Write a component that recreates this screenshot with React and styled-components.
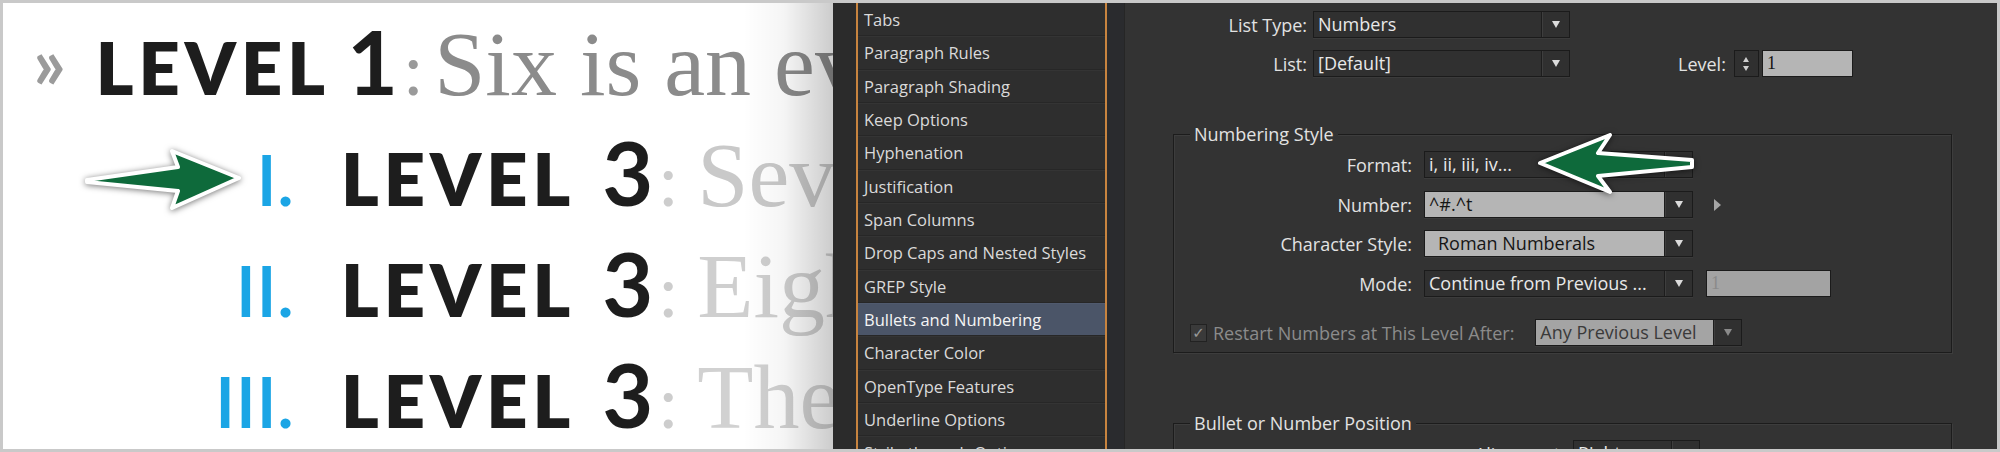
import React from 'react';
import styled, { createGlobalStyle } from 'styled-components';

const GlobalStyle = createGlobalStyle`
  html, body {
    margin: 0;
    padding: 0;
    background: #ffffff;
  }
`;

const Frame = styled.div`
  width: 2000px;
  height: 452px;
  box-sizing: border-box;
  border: 3px solid #c9c9c9;
  display: flex;
  overflow: hidden;
  background: #ffffff;
`;

/* ---------- left: the typeset sample ---------- */

const Sample = styled.div`
  position: relative;
  flex: none;
  width: 830px;
  height: 100%;
  box-sizing: border-box;
  padding-top: 14px;
  overflow: hidden;
  white-space: nowrap;
  font-family: Lato, 'Noto Sans', sans-serif;
`;

const Line = styled.div`
  display: flex;
  align-items: baseline;
  height: 111px;
  padding-left: ${props => props.$indent || 0}px;
  line-height: 1;
`;

const Chevrons = styled.span`
  font-size: 72px;
  font-weight: 700;
  color: #9b9b9b;
  margin-right: 30px;
  position: relative;
  top: -6px;
`;

const Marker = styled.span`
  flex: none;
  width: 291px;
  text-align: right;
  font-size: 72px;
  font-weight: 600;
  color: #1ba5e5;
  margin-right: 47px;
`;

const Caps = styled.span`
  font-size: 72px;
  font-weight: 800;
  color: #1d1d1d;
  letter-spacing: 5px;
`;

const Digit = styled.span`
  font-size: 88px;
  font-weight: 700;
  color: #1d1d1d;
  margin-left: ${props => props.$gap}px;
`;

const Colon = styled.span`
  font-size: 72px;
  font-weight: 400;
  color: ${props => props.$tone};
  margin-left: 6px;
`;

const Body = styled.span`
  font-family: 'Liberation Serif', 'Times New Roman', serif;
  font-size: 92px;
  color: ${props => props.$tone};
  margin-left: ${props => props.$gap}px;
`;

const EdgeShade = styled.div`
  position: absolute;
  top: 0;
  right: 0;
  width: 90px;
  height: 100%;
  pointer-events: none;
  background: linear-gradient(
    to right,
    rgba(0, 0, 0, 0) 0%,
    rgba(0, 0, 0, 0.04) 45%,
    rgba(0, 0, 0, 0.2) 100%
  );
`;

const Pointer = styled.svg`
  position: absolute;
  left: ${props => props.$x}px;
  top: ${props => props.$y}px;
  overflow: visible;
  filter: drop-shadow(0 1px 3px rgba(0, 0, 0, 0.55));
`;

/* ---------- right: the dialog ---------- */

const Dialog = styled.div`
  flex: 1;
  display: flex;
  height: 100%;
  background: #333333;
  font-family: 'Open Sans', 'Noto Sans', sans-serif;
`;

const Gutter = styled.div`
  flex: none;
  width: ${props => props.$w}px;
  background: ${props => props.$bg};
  box-shadow: ${props => props.$edge || 'none'};
`;

const Categories = styled.div`
  flex: none;
  width: 247px;
  height: 100%;
  border-left: 2px solid #c8843f;
  border-right: 2px solid #c8843f;
  background: #2e2e2e;
  overflow: hidden;
`;

const Category = styled.div`
  height: 33.33px;
  box-sizing: border-box;
  padding-left: 6px;
  line-height: 33px;
  font-size: 16.5px;
  color: ${props => (props.$active ? '#f4f4f4' : '#dadada')};
  background: ${props => (props.$active ? '#4b5568' : '#2e2e2e')};
  border-bottom: 1px solid #272727;
  box-shadow: inset 0 1px 0 ${props => (props.$active ? '#55607380' : '#343434')};
  white-space: nowrap;
`;

const Settings = styled.div`
  position: relative;
  flex: 1;
  height: 100%;
  padding-top: 8px;
  box-sizing: border-box;
  overflow: hidden;
  font-size: 18px;
`;

const Row = styled.div`
  display: flex;
  align-items: center;
  height: 27px;
  margin-top: ${props => props.$mt || 0}px;
  padding-left: ${props => props.$pl || 0}px;
`;

const Label = styled.span`
  flex: none;
  width: ${props => (props.$w ? `${props.$w}px` : 'auto')};
  margin-left: ${props => props.$ml || 0}px;
  margin-right: ${props => (props.$gap === undefined ? 6 : props.$gap)}px;
  text-align: right;
  color: ${props => (props.$dim ? '#8b8b8b' : '#e2e2e2')};
  white-space: nowrap;
`;

const Select = styled.div`
  flex: none;
  display: flex;
  width: ${props => props.$w}px;
  height: 27px;
  box-sizing: border-box;
  border: 1px solid #1b1b1b;
  background: ${props => props.$face || '#303030'};
  box-shadow: 0 1px 0 #3b3b3b;
`;

const Value = styled.span`
  flex: 1;
  padding-left: ${props => props.$pl || 4}px;
  line-height: 25px;
  color: ${props => props.$ink || '#e8e8e8'};
  white-space: nowrap;
  overflow: hidden;
  font-family: ${props => (props.$serif ? "'Liberation Serif', serif" : 'inherit')};
`;

const Drop = styled.span`
  flex: none;
  width: 27px;
  display: flex;
  align-items: center;
  justify-content: center;
  background: #303030;
  border-left: 1px solid #1d1d1d;
  box-shadow: inset 1px 0 0 #3e3e3e;
`;

const Caret = styled.span`
  width: 0;
  height: 0;
  border-left: 4.5px solid transparent;
  border-right: 4.5px solid transparent;
  border-${props => (props.$up ? 'bottom' : 'top')}: 7px solid ${props => props.$ink || '#dcdcdc'};
`;

const Field = styled.div`
  flex: none;
  width: ${props => props.$w}px;
  height: 27px;
  margin-left: ${props => props.$ml || 0}px;
  box-sizing: border-box;
  border: 1px solid #1b1b1b;
  background: ${props => props.$face};
  display: flex;
`;

const Spinner = styled.div`
  flex: none;
  width: 25px;
  height: 27px;
  margin-right: 3px;
  box-sizing: border-box;
  border: 1px solid #1b1b1b;
  background: #303030;
  display: flex;
  flex-direction: column;
  align-items: center;
  justify-content: center;
  gap: 4px;

  & > span {
    border-left-width: 3.5px;
    border-right-width: 3.5px;
    border-top-width: 5px;
    border-bottom-width: 5px;
  }
`;

const Reveal = styled.span`
  margin-left: 21px;
  width: 0;
  height: 0;
  border-top: 6px solid transparent;
  border-bottom: 6px solid transparent;
  border-left: 7px solid #a6a6a6;
`;

const Check = styled.span`
  flex: none;
  width: 17px;
  height: 18px;
  box-sizing: border-box;
  border: 1px solid #222;
  background: #3a3a3a;
  color: #9a9a9a;
  font-family: 'DejaVu Sans', sans-serif;
  font-size: 15px;
  line-height: 16px;
  text-align: center;
`;

const Group = styled.fieldset`
  margin: ${props => props.$mt}px 0 0 48px;
  width: 779px;
  box-sizing: border-box;
  padding: 0 0 6px 0;
  border: 1px solid #1c1c1c;
  box-shadow: 1px 1px 0 #3d3d3d, inset 1px 1px 0 #3d3d3d;
  min-inline-size: 0;
`;

const Legend = styled.legend`
  margin-left: 16px;
  padding: 0 4px;
  background: #333333;
  color: #e2e2e2;
  line-height: 22px;
`;

const categories = [
  'Tabs',
  'Paragraph Rules',
  'Paragraph Shading',
  'Keep Options',
  'Hyphenation',
  'Justification',
  'Span Columns',
  'Drop Caps and Nested Styles',
  'GREP Style',
  'Bullets and Numbering',
  'Character Color',
  'OpenType Features',
  'Underline Options',
  'Strikethrough Options'
];

const levels = [
  { marker: 'I.', text: 'Seven is an odd number', tone: '#c9c9c9' },
  { marker: 'II.', text: 'Eight is an even number', tone: '#cfcfcf' },
  { marker: 'III.', text: 'The next one is nine', tone: '#d1d1d1' }
];

const Arrow = ({ d, x, y, w, h }) => (
  <Pointer $x={x} $y={y} width={w} height={h} viewBox={`0 0 ${w} ${h}`}>
    <path
      d={d}
      fill="#0e6a3b"
      stroke="#ffffff"
      strokeWidth="4"
      strokeLinejoin="round"
    />
  </Pointer>
);

export default function App() {
  return (
    <>
      <GlobalStyle />
      <Frame>
        <Sample>
          <Line $indent={30}>
            <Chevrons>»</Chevrons>
            <Caps>LEVEL</Caps>
            <Digit $gap={17}>1</Digit>
            <Colon $tone="#9a9a9a">:</Colon>
            <Body $tone="#8b8b8b" $gap={12}>
              Six is an even number
            </Body>
          </Line>
          {levels.map(level => (
            <Line key={level.marker}>
              <Marker>{level.marker}</Marker>
              <Caps>LEVEL</Caps>
              <Digit $gap={27}>3</Digit>
              <Colon $tone="#cdcdcd">:</Colon>
              <Body $tone={level.tone} $gap={20}>
                {level.text}
              </Body>
            </Line>
          ))}
          <EdgeShade />
          <Arrow
            x={72}
            y={137}
            w={180}
            h={85}
            d="M12 40 L103 27 L97 11 L164 38 L97 68 L103 51 L12 42 Z"
          />
        </Sample>

        <Dialog>
          <Gutter $w={23} $bg="#2b2b2b" />
          <Categories>
            {categories.map(name => (
              <Category key={name} $active={name === 'Bullets and Numbering'}>
                {name}
              </Category>
            ))}
          </Categories>
          <Gutter $w={18} $bg="#2a2b2e" $edge="inset -1px 0 0 #262626" />

          <Settings>
            <Row>
              <Label $w={182}>List Type:</Label>
              <Select $w={257}>
                <Value>Numbers</Value>
                <Drop>
                  <Caret />
                </Drop>
              </Select>
            </Row>
            <Row $mt={12}>
              <Label $w={182}>List:</Label>
              <Select $w={257}>
                <Value>[Default]</Value>
                <Drop>
                  <Caret />
                </Drop>
              </Select>
              <Label $ml={108} $gap={8}>
                Level:
              </Label>
              <Spinner>
                <Caret $up $ink="#cfcfcf" />
                <Caret $ink="#cfcfcf" />
              </Spinner>
              <Field $w={91} $face="#b5b5b5">
                <Value $ink="#151515" $serif>
                  1
                </Value>
              </Field>
            </Row>

            <Group $mt={46}>
              <Legend>Numbering Style</Legend>
              <Row $mt={6}>
                <Label $w={238} $gap={12}>
                  Format:
                </Label>
                <Select $w={269}>
                  <Value>i, ii, iii, iv...</Value>
                  <Drop>
                    <Caret />
                  </Drop>
                </Select>
              </Row>
              <Row $mt={13}>
                <Label $w={238} $gap={12}>
                  Number:
                </Label>
                <Select $w={269} $face="#b5b5b5">
                  <Value $ink="#151515">^#.^t</Value>
                  <Drop>
                    <Caret />
                  </Drop>
                </Select>
                <Reveal />
              </Row>
              <Row $mt={12}>
                <Label $w={238} $gap={12}>
                  Character Style:
                </Label>
                <Select $w={269} $face="#b5b5b5">
                  <Value $ink="#151515" $pl={13}>
                    Roman Numberals
                  </Value>
                  <Drop>
                    <Caret />
                  </Drop>
                </Select>
              </Row>
              <Row $mt={13}>
                <Label $w={238} $gap={12}>
                  Mode:
                </Label>
                <Select $w={269}>
                  <Value>Continue from Previous ...</Value>
                  <Drop>
                    <Caret />
                  </Drop>
                </Select>
                <Field $w={125} $ml={13} $face="#a3a3a3">
                  <Value $ink="#8a8a8a" $serif>
                    1
                  </Value>
                </Field>
              </Row>
              <Row $mt={22} $pl={16}>
                <Check>✓</Check>
                <Label $ml={6} $gap={21} $dim>
                  Restart Numbers at This Level After:
                </Label>
                <Select $w={207} $face="#a4a4a4">
                  <Value $ink="#3a3a3a">Any Previous Level</Value>
                  <Drop>
                    <Caret $ink="#8a8a8a" />
                  </Drop>
                </Select>
              </Row>
            </Group>

            <Group $mt={59}>
              <Legend>Bullet or Number Position</Legend>
              <Row $mt={6}>
                <Label $w={391} $gap={8}>
                  Alignment:
                </Label>
                <Select $w={127}>
                  <Value>Right</Value>
                  <Drop>
                    <Caret />
                  </Drop>
                </Select>
              </Row>
            </Group>

            <Arrow
              x={400}
              y={119}
              w={185}
              h={85}
              d="M15 41 L85 13 L73 31 L167 38 L167 45 L73 54 L85 70 Z"
            />
          </Settings>
        </Dialog>
      </Frame>
    </>
  );
}
